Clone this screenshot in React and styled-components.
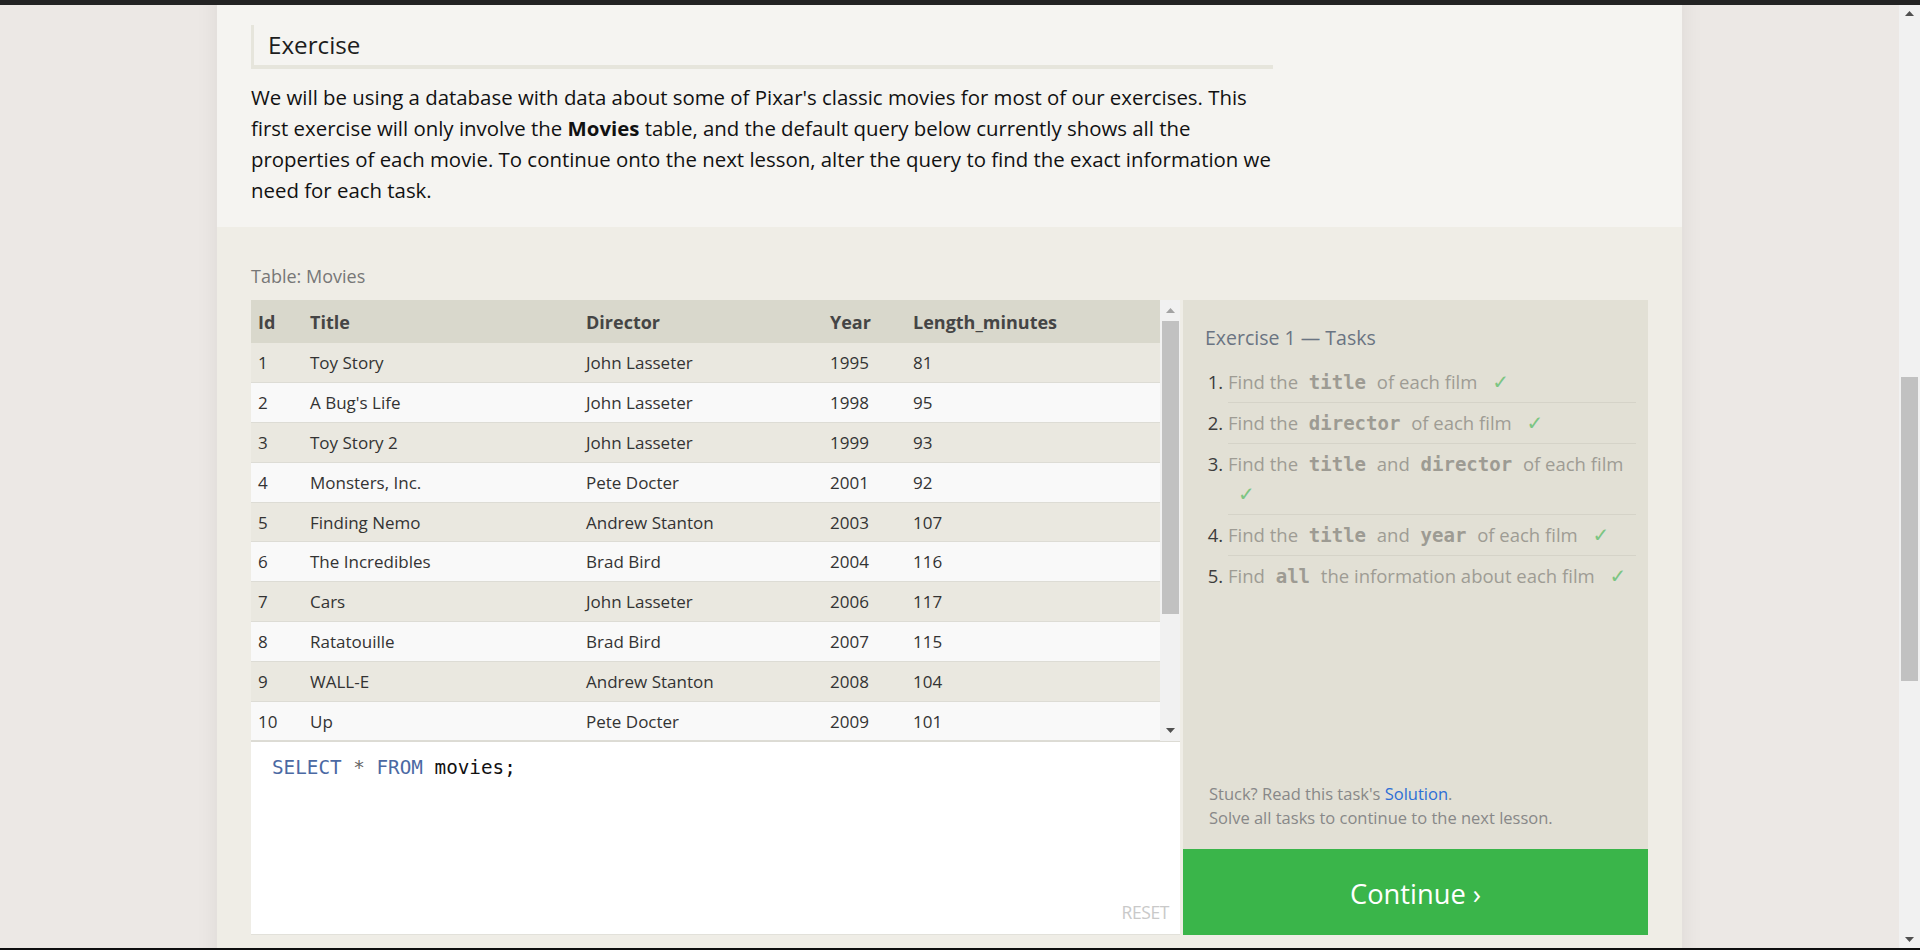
import React, { useLayoutEffect, useRef, useState } from "react";
import styled, { createGlobalStyle } from "styled-components";

const GlobalStyle = createGlobalStyle`
  html, body {
    margin: 0;
    height: 100%;
    overflow: hidden;
  }
  body {
    font-family: "Open Sans", "Noto Sans", sans-serif;
    color: #222;
  }
  * {
    box-sizing: border-box;
  }
`;

const Frame = styled.div`
  height: 100vh;
  display: flex;
  flex-direction: column;
  background: #1b1b1b;
`;

const WindowEdge = styled.div`
  flex: none;
  height: ${(p) => p.$h}px;
  background: ${(p) => p.$bg};
`;

const Screen = styled.div`
  flex: 1;
  min-height: 0;
  display: flex;
`;

const Viewport = styled.div`
  flex: 1;
  overflow: hidden;
  background: #ece8e5;
`;

/* scrollbar rail, drawn by hand */
const Rail = styled.div`
  flex: none;
  width: ${(p) => p.$w}px;
  display: flex;
  flex-direction: column;
  background: #f1f1f1;
`;

const RailButton = styled.div`
  flex: none;
  height: ${(p) => p.$h}px;
  display: flex;
  align-items: center;
  justify-content: center;
  color: ${(p) => p.$color};
`;

const RailTrack = styled.div`
  position: relative;
  flex: 1;
`;

const RailThumb = styled.div`
  position: absolute;
  left: ${(p) => p.$l}px;
  right: ${(p) => p.$r}px;
  background: #c1c1c1;
`;

const Arrow = ({ up }) => (
  <svg width="9" height="5" viewBox="0 0 9 5">
    <path d={up ? "M4.5 0L9 5H0z" : "M0 0h9L4.5 5z"} fill="currentColor" />
  </svg>
);

const ScrollRail = ({ width, button, inset, upColor, downColor, thumb }) => (
  <Rail $w={width}>
    <RailButton $h={button} $color={upColor}>
      <Arrow up />
    </RailButton>
    <RailTrack>
      <RailThumb
        $l={inset[0]}
        $r={inset[1]}
        style={{ top: `${thumb.top * 100}%`, height: `${thumb.size * 100}%` }}
      />
    </RailTrack>
    <RailButton $h={button} $color={downColor}>
      <Arrow />
    </RailButton>
  </Rail>
);

const Card = styled.main`
  width: 1465px;
  margin: 0 auto;
  background: #f5f4f1;
  box-shadow: 0 0 22px rgba(0, 0, 0, 0.07);
`;

const Lesson = styled.section`
  height: 1121px;
  overflow: hidden;
  padding: 40px 34px 0;
  h1 {
    margin: 0 0 24px;
    font-size: 34px;
    font-weight: 400;
  }
  p {
    max-width: 1022px;
    margin: 0 0 20px;
    font-size: 20.4px;
    line-height: 31px;
  }
  pre {
    max-width: 1022px;
    margin: 0 0 24px;
    padding: 16px 20px;
    background: #ebe9e1;
    font-family: "DejaVu Sans Mono", monospace;
    font-size: 17px;
  }
`;

const ExerciseIntro = styled.section`
  padding: 0 34px 21px;
`;

const SectionHeading = styled.h2`
  max-width: 1022px;
  margin: 0;
  padding-left: 14px;
  border-left: 3px solid #e6e5dc;
  border-bottom: 4px solid #e6e5dc;
  font-size: 24.2px;
  font-weight: 400;
  line-height: 40px;
  color: #1d1d1d;
`;

const Lead = styled.p`
  max-width: 1030px;
  margin: 13px 0 0;
  font-size: 20.4px;
  line-height: 31px;
  color: #111;
  b {
    font-weight: 700;
  }
`;

const Workbench = styled.section`
  background: #efede6;
  padding: 36px 34px 34px;
`;

const Caption = styled.div`
  font-size: 18px;
  line-height: 26px;
  color: #777;
  margin-bottom: 11px;
`;

const Split = styled.div`
  display: grid;
  grid-template-columns: 929px 465px;
  column-gap: 3px;
`;

const LeftCol = styled.div`
  display: flex;
  flex-direction: column;
`;

const TableBox = styled.div`
  height: 441px;
  display: flex;
`;

const TableScroll = styled.div`
  flex: 1;
  overflow: hidden;
  background: #f9f9f9;
`;

const Table = styled.table`
  width: 100%;
  border-collapse: collapse;
  table-layout: fixed;
  font-size: 17px;
  color: #333;
`;

const Th = styled.th`
  width: ${(p) => (p.$w ? `${p.$w}px` : "auto")};
  height: 43px;
  padding: 0 7px;
  background: #d9d8cc;
  text-align: left;
  font-size: 18px;
  font-weight: 700;
  color: #454545;
`;

const Tr = styled.tr`
  &:nth-child(odd) {
    background: #eae8e0;
  }
  &:nth-child(even) {
    background: #f9f9f9;
  }
`;

const Td = styled.td`
  height: 39.8px;
  padding: 0 7px;
  border-bottom: 1px solid #dddcd5;
  white-space: nowrap;
`;

const Editor = styled.div`
  position: relative;
  flex: none;
  height: 194px;
  background: #fff;
  border-top: 1px solid #dcdbd4;
  border-bottom: 1px solid #e2e1da;
  padding: 13px 21px;
  font-family: "DejaVu Sans Mono", "Liberation Mono", monospace;
  font-size: 19.3px;
  line-height: 26px;
  color: #111;
`;

const Keyword = styled.span`
  color: #4b69a3;
`;

const Operator = styled.span`
  color: #666;
`;

const ResetButton = styled.button`
  position: absolute;
  right: 11px;
  bottom: 10px;
  border: 0;
  padding: 0;
  background: none;
  font-family: "Open Sans", sans-serif;
  font-size: 17.5px;
  color: #c9c9c9;
  letter-spacing: -0.4px;
`;

const TaskPanel = styled.aside`
  display: flex;
  flex-direction: column;
  background: #e2e0d5;
`;

const PanelTitle = styled.h3`
  margin: 0;
  padding: 25px 12px 0 22px;
  font-size: 19.5px;
  font-weight: 400;
  line-height: 26px;
  color: #6a7482;
`;

const TaskList = styled.ol`
  margin: 11px 12px 0 22px;
  padding-left: 23px;
  font-size: 18.5px;
  line-height: 30px;
  color: #9e9c94;
`;

const Task = styled.li`
  padding: 5px 0;
  border-bottom: 1px solid #d5d3c8;
  &:last-child {
    border-bottom: 0;
  }
  &::marker {
    color: #3c3c3c;
  }
`;

const Code = styled.code`
  padding: 0 6px;
  font-family: "DejaVu Sans Mono", "Liberation Mono", monospace;
  font-size: 19px;
  font-weight: 700;
  color: #9d9b93;
`;

const Check = styled.span`
  display: inline-block;
  margin-left: 10px;
  font-family: "DejaVu Sans", sans-serif;
  font-size: 20px;
  line-height: 30px;
  color: #7cc583;
`;

const Help = styled.div`
  margin-top: auto;
  padding: 0 12px 19px 26px;
  font-size: 16.5px;
  line-height: 24px;
  color: #888;
  a {
    color: #2e6fd6;
    text-decoration: none;
  }
`;

const ContinueButton = styled.button`
  flex: none;
  height: 86px;
  padding: 3px 0 0;
  border: 0;
  background: #3ab54a;
  color: #fff;
  font-family: "Open Sans", sans-serif;
  font-size: 27.3px;
`;

const LessonFooter = styled.footer`
  height: 754px;
  padding: 40px 34px;
  background: #f5f4f1;
  font-size: 19px;
  color: #555;
`;

const movies = [
  [1, "Toy Story", "John Lasseter", 1995, 81],
  [2, "A Bug's Life", "John Lasseter", 1998, 95],
  [3, "Toy Story 2", "John Lasseter", 1999, 93],
  [4, "Monsters, Inc.", "Pete Docter", 2001, 92],
  [5, "Finding Nemo", "Andrew Stanton", 2003, 107],
  [6, "The Incredibles", "Brad Bird", 2004, 116],
  [7, "Cars", "John Lasseter", 2006, 117],
  [8, "Ratatouille", "Brad Bird", 2007, 115],
  [9, "WALL-E", "Andrew Stanton", 2008, 104],
  [10, "Up", "Pete Docter", 2009, 101],
  [11, "Toy Story 3", "Lee Unkrich", 2010, 103],
  [12, "Cars 2", "John Lasseter", 2011, 120],
  [13, "Brave", "Brenda Chapman", 2012, 102],
  [14, "Monsters University", "Dan Scanlon", 2013, 110],
];

const columns = [
  ["Id", 52],
  ["Title", 276],
  ["Director", 244],
  ["Year", 83],
  ["Length_minutes"],
];

// strings are plain text, arrays are column names
const tasks = [
  ["Find the ", ["title"], " of each film"],
  ["Find the ", ["director"], " of each film"],
  ["Find the ", ["title"], " and ", ["director"], " of each film"],
  ["Find the ", ["title"], " and ", ["year"], " of each film"],
  ["Find ", ["all"], " the information about each film"],
];

const metrics = (el) => ({
  top: el.scrollTop / el.scrollHeight,
  size: el.clientHeight / el.scrollHeight,
});

export default function App() {
  const viewRef = useRef(null);
  const headRef = useRef(null);
  const tableRef = useRef(null);
  const [pageThumb, setPageThumb] = useState({ top: 0, size: 1 });
  const [tableThumb, setTableThumb] = useState({ top: 0, size: 1 });

  useLayoutEffect(() => {
    const view = viewRef.current;
    const head = headRef.current;
    if (!view || !head) return;
    const offset =
      head.getBoundingClientRect().top - view.getBoundingClientRect().top + view.scrollTop;
    view.scrollTop = offset - 20;
    setPageThumb(metrics(view));
    if (tableRef.current) setTableThumb(metrics(tableRef.current));
  }, []);

  return (
    <Frame>
      <GlobalStyle />
      <WindowEdge $h={5} $bg="#232323" />
      <Screen>
        <Viewport ref={viewRef}>
          <Card>
            <Lesson>
              <h1>SQL Lesson 1: SELECT queries 101</h1>
              <p>
                To retrieve data from a SQL database, we need to write SELECT statements, which are
                often colloquially refered to as queries. A query in itself is just a statement
                which declares what data we are looking for, where to find it in the database, and
                optionally, how to transform it before it is returned.
              </p>
              <p>
                You can think of a table in SQL as a type of an entity (ie. Dogs), and each row in
                that table as a specific instance of that type (ie. A pug, a beagle, a different
                colored pug, etc). This means that the columns would then represent the common
                properties shared by all instances of that entity (ie. Color of fur, length of
                tail, etc).
              </p>
              <pre>SELECT column, another_column, … FROM mytable;</pre>
              <p>
                The result of this query will be a two-dimensional set of rows and columns,
                effectively a copy of the table, but only with the columns that we requested.
              </p>
              <pre>SELECT * FROM mytable;</pre>
              <p>
                This query, in particular, is really useful because it's a simple way to inspect a
                table by dumping all the data at once.
              </p>
            </Lesson>

            <ExerciseIntro>
              <SectionHeading ref={headRef}>Exercise</SectionHeading>
              <Lead>
                We will be using a database with data about some of Pixar's classic movies for
                most of our exercises. This first exercise will only involve the <b>Movies</b>{" "}
                table, and the default query below currently shows all the properties of each
                movie. To continue onto the next lesson, alter the query to find the exact
                information we need for each task.
              </Lead>
            </ExerciseIntro>

            <Workbench>
              <Caption>Table: Movies</Caption>
              <Split>
                <LeftCol>
                  <TableBox>
                    <TableScroll ref={tableRef}>
                      <Table>
                        <thead>
                          <tr>
                            {columns.map(([name, w]) => (
                              <Th key={name} $w={w}>
                                {name}
                              </Th>
                            ))}
                          </tr>
                        </thead>
                        <tbody>
                          {movies.map((row) => (
                            <Tr key={row[0]}>
                              {row.map((cell, i) => (
                                <Td key={i}>{cell}</Td>
                              ))}
                            </Tr>
                          ))}
                        </tbody>
                      </Table>
                    </TableScroll>
                    <ScrollRail
                      width={20}
                      button={21}
                      inset={[2, 1]}
                      upColor="#a3a3a3"
                      downColor="#505050"
                      thumb={tableThumb}
                    />
                  </TableBox>
                  <Editor>
                    <Keyword>SELECT</Keyword> <Operator>*</Operator> <Keyword>FROM</Keyword>{" "}
                    movies;
                    <ResetButton>RESET</ResetButton>
                  </Editor>
                </LeftCol>

                <TaskPanel>
                  <PanelTitle>Exercise 1 — Tasks</PanelTitle>
                  <TaskList>
                    {tasks.map((parts, i) => (
                      <Task key={i}>
                        {parts.map((part, j) =>
                          Array.isArray(part) ? <Code key={j}>{part[0]}</Code> : part
                        )}{" "}
                        <Check>✓</Check>
                      </Task>
                    ))}
                  </TaskList>
                  <Help>
                    Stuck? Read this task's <a href="#solution">Solution</a>.
                    <br />
                    Solve all tasks to continue to the next lesson.
                  </Help>
                  <ContinueButton>Continue ›</ContinueButton>
                </TaskPanel>
              </Split>
            </Workbench>

            <LessonFooter>Next – SQL Lesson 2: Queries with constraints (Pt. 1)</LessonFooter>
          </Card>
        </Viewport>
        <ScrollRail
          width={21}
          button={17}
          inset={[2, 2]}
          upColor="#505050"
          downColor="#505050"
          thumb={pageThumb}
        />
      </Screen>
      <WindowEdge $h={2} $bg="#0e0e0e" />
    </Frame>
  );
}
